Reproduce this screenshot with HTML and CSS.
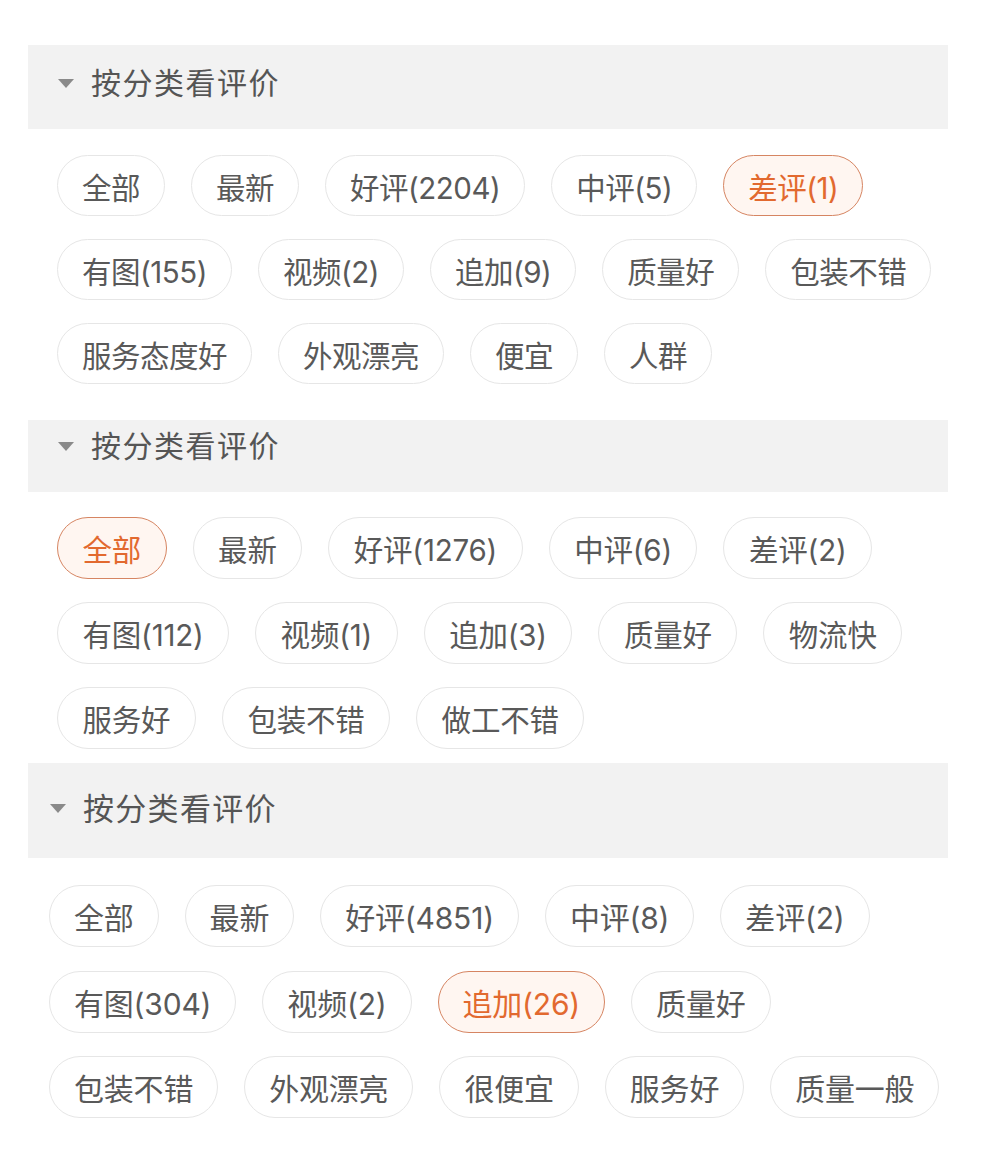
FILE: index.html
```html
<!DOCTYPE html>
<html lang="zh-CN">
<head>
<meta charset="utf-8">
<title>按分类看评价</title>
<link rel="stylesheet" href="styles.css">
</head>
<body>
<div class="page">
  <section class="block block-1">
    <div class="head">
      <svg class="caret" width="16" height="9" viewBox="0 0 16 9"><polygon points="0,0 16,0 8,9" fill="#8a8a8a"/></svg>
      <span class="title">按分类看评价</span>
    </div>
    <div class="tags">
      <span class="tag">全部</span>
      <span class="tag">最新</span>
      <span class="tag">好评(2204)</span>
      <span class="tag">中评(5)</span>
      <span class="tag active">差评(1)</span>
      <span class="tag">有图(155)</span>
      <span class="tag">视频(2)</span>
      <span class="tag">追加(9)</span>
      <span class="tag">质量好</span>
      <span class="tag">包装不错</span>
      <span class="tag">服务态度好</span>
      <span class="tag">外观漂亮</span>
      <span class="tag">便宜</span>
      <span class="tag">人群</span>
    </div>
  </section>
  <section class="block block-2">
    <div class="head">
      <svg class="caret" width="16" height="9" viewBox="0 0 16 9"><polygon points="0,0 16,0 8,9" fill="#8a8a8a"/></svg>
      <span class="title">按分类看评价</span>
    </div>
    <div class="tags">
      <span class="tag active">全部</span>
      <span class="tag">最新</span>
      <span class="tag">好评(1276)</span>
      <span class="tag">中评(6)</span>
      <span class="tag">差评(2)</span>
      <span class="tag">有图(112)</span>
      <span class="tag">视频(1)</span>
      <span class="tag">追加(3)</span>
      <span class="tag">质量好</span>
      <span class="tag">物流快</span>
      <span class="tag">服务好</span>
      <span class="tag">包装不错</span>
      <span class="tag">做工不错</span>
    </div>
  </section>
  <section class="block block-3">
    <div class="head">
      <svg class="caret" width="16" height="9" viewBox="0 0 16 9"><polygon points="0,0 16,0 8,9" fill="#8a8a8a"/></svg>
      <span class="title">按分类看评价</span>
    </div>
    <div class="tags">
      <span class="tag">全部</span>
      <span class="tag">最新</span>
      <span class="tag">好评(4851)</span>
      <span class="tag">中评(8)</span>
      <span class="tag">差评(2)</span>
      <span class="tag">有图(304)</span>
      <span class="tag">视频(2)</span>
      <span class="tag active">追加(26)</span>
      <span class="tag">质量好</span>
      <span class="tag">包装不错</span>
      <span class="tag">外观漂亮</span>
      <span class="tag">很便宜</span>
      <span class="tag">服务好</span>
      <span class="tag">质量一般</span>
    </div>
  </section>
</div>
</body>
</html>
```

FILE: styles.css
```css
html, body {
  margin: 0;
  padding: 0;
  background: #ffffff;
}

body {
  font-family: Inter, "Noto Sans CJK SC", sans-serif;
  color: #575757;
}

.page {
  width: 983px;
  padding-top: 45px;
}

.block {
  display: flex;
  flex-direction: column;
}

.head {
  margin-left: 28px;
  width: 920px;
  box-sizing: border-box;
  background: #f2f2f2;
  display: flex;
  align-items: center;
  gap: 17px;
}

.caret {
  display: block;
  flex: none;
}

.title {
  font-size: 30px;
  line-height: 40px;
  color: #555555;
  letter-spacing: 1.5px;
}

.tags {
  display: flex;
  flex-wrap: wrap;
  column-gap: 26px;
  width: 920px;
}

.tag {
  box-sizing: border-box;
  border: 1.5px solid #e6e6e6;
  border-radius: 40px;
  background: #ffffff;
  font-size: 29.5px;
  letter-spacing: -0.5px;
  color: #595959;
  padding: 0 24px;
  white-space: nowrap;
  display: flex;
  align-items: center;
}

.tag.active {
  border-color: #d68562;
  background: #fff6f1;
  color: #e2692f;
}

/* section 1 */
.block-1 .head {
  height: 84px;
  padding-left: 30px;
  padding-bottom: 8px;
}
.block-1 .tags {
  margin: 26px 0 0 57px;
  row-gap: 23px;
}
.block-1 .tag {
  height: 61px;
}

/* section 2 */
.block-2 {
  margin-top: 36px;
}
.block-2 .head {
  height: 72px;
  padding-left: 30px;
  padding-bottom: 20px;
}
.block-2 .tags {
  margin: 25px 0 0 57px;
  row-gap: 23px;
}
.block-2 .tag {
  height: 62px;
  letter-spacing: -0.2px;
  padding: 0 24.5px;
}

/* section 3 */
.block-3 {
  margin-top: 14px;
}
.block-3 .head {
  height: 95px;
  padding-left: 22px;
  padding-bottom: 4px;
}
.block-3 .title {
  font-size: 31px;
  letter-spacing: 1.3px;
}
.block-3 .tags {
  margin: 27px 0 0 49px;
  row-gap: 23.5px;
  width: 900px;
}
.block-3 .tag {
  height: 62px;
  font-size: 30px;
  letter-spacing: -0.2px;
}
```
